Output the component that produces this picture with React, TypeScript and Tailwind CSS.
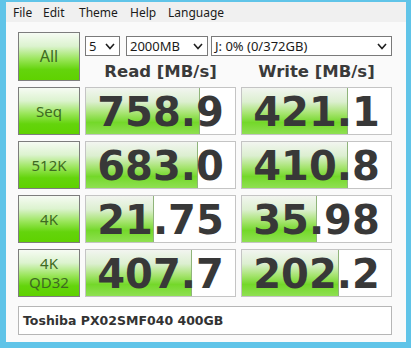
import React from "react";

// benchmark results (MB/s)
const rows = [
  { label: ["Seq"], read: "758.9", write: "421.1" },
  { label: ["512K"], read: "683.0", write: "410.8" },
  { label: ["4K"], read: "21.75", write: "35.98" },
  { label: ["4K", "QD32"], read: "407.7", write: "202.2" },
];

const menuItems = [
  { label: "File", w: "w-[30px]" },
  { label: "Edit", w: "w-[36px]" },
  { label: "Theme", w: "w-[51px]" },
  { label: "Help", w: "w-[38px]" },
  { label: "Language", w: "w-[60px]" },
];

// meter length is logarithmic, like the original tool
const meter = (v: string) => Math.round((Math.log10(parseFloat(v)) + 1) * 29.6);

const btnBg =
  "bg-[linear-gradient(to_bottom,#f6fbf3_0%,#dcf3cf_28%,#9be65c_55%,#64d40c_78%,#5fd200_100%)]";
const fillBg =
  "bg-[linear-gradient(to_bottom,#f2f5f0_0%,#dcefd0_30%,#a6e470_55%,#74d82a_75%,#8fe052_100%)]";

function Chevron() {
  return (
    <svg width="10" height="7" viewBox="0 0 10 7" className="shrink-0">
      <polyline points="1,1 5,5.5 9,1" fill="none" stroke="#1f1f1f" strokeWidth="1.6" />
    </svg>
  );
}

function Select({ text, w }: { text: string; w: string }) {
  return (
    <div className={`${w} h-[20px] flex items-center justify-between border border-[#7a7a7a] bg-white pl-[3px] pr-[4px]`}>
      <span className="text-[13px] leading-[18px] text-[#1a1a1a]">{text}</span>
      <Chevron />
    </div>
  );
}

function GreenButton({ lines, big }: { lines: string[]; big?: boolean }) {
  return (
    <div
      className={`w-[62px] ${big ? "h-[49px]" : "h-[48px]"} border border-[#7d7d7d] ${btnBg} flex flex-col items-center justify-center text-[#3e6a22] ${big ? "text-[16px]" : "text-[15px]"} leading-[19px]`}
    >
      {lines.map((l) => (
        <span key={l}>{l}</span>
      ))}
    </div>
  );
}

function Meter({ value }: { value: string }) {
  return (
    <div className="relative w-[151px] h-[48px] border border-[#c4c4c4] bg-white overflow-hidden">
      <div
        className={`absolute left-0 top-0 bottom-0 ${fillBg} border-r border-r-[#8fb47a]`}
        style={{ width: meter(value) - 1 }}
      />
      <div className="relative h-full flex items-center justify-center pt-[2px] font-['DejaVu_Sans',sans-serif] font-bold text-[40px] leading-[44px] text-[#383838]">
        {value}
      </div>
    </div>
  );
}

export default function App() {
  return (
    <div className="w-[411px] h-[348px] bg-[#60c4e8] pt-[2px] pl-[6px] pr-[5px] pb-[6px] flex flex-col font-['Noto_Sans',sans-serif]">
      <div className="flex-1 flex flex-col bg-[#fafafa]">
        {/* menu bar */}
        <div className="h-[20px] bg-[#f0f0f0] flex pl-[7px] pt-[3px] text-[12px] leading-[16px] text-[#1a1a1a]">
          {menuItems.map((m) => (
            <span key={m.label} className={m.w}>
              {m.label}
            </span>
          ))}
        </div>

        <div className="flex flex-col pl-[12px] pt-[10px]">
          {/* top: All + selects + headers */}
          <div className="flex gap-[5px]">
            <GreenButton lines={["All"]} big />
            <div className="w-[307px] flex flex-col">
              <div className="mt-[4px] flex">
                <Select text="5" w="w-[35px]" />
                <div className="w-[6px]" />
                <Select text="2000MB" w="w-[82px]" />
                <div className="w-[3px]" />
                <Select text="J: 0% (0/372GB)" w="w-[181px]" />
              </div>
              <div className="grid grid-cols-[151px_151px] gap-[5px] pt-[7px] font-['DejaVu_Sans',sans-serif] font-bold text-[16.5px] leading-[18px] text-[#3a3a3a]">
                <div className="text-center">Read [MB/s]</div>
                <div className="text-center">Write [MB/s]</div>
              </div>
            </div>
          </div>

          {/* results */}
          {rows.map((r) => (
            <div key={r.read} className="mt-[6px] flex gap-[5px]">
              <GreenButton lines={r.label} />
              <Meter value={r.read} />
              <Meter value={r.write} />
            </div>
          ))}

          {/* drive model */}
          <div className="mt-[9px] w-[374px] h-[29px] border border-[#b6b6b6] bg-white flex items-center pl-[4px] pt-[1px] font-['DejaVu_Sans',sans-serif] font-bold text-[12.5px] text-[#333333]">
            Toshiba PX02SMF040 400GB
          </div>
        </div>
      </div>
    </div>
  );
}
